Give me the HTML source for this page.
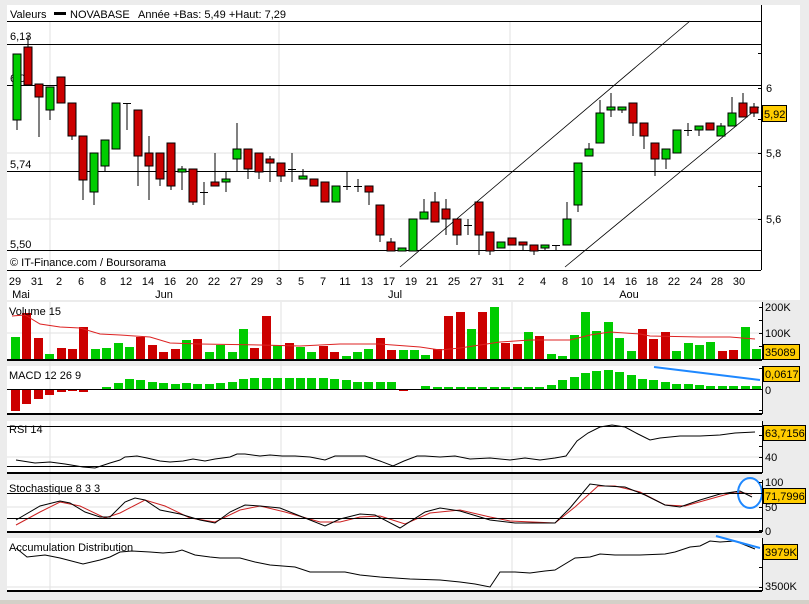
<!DOCTYPE html>
<html><head><meta charset="utf-8"><style>
body{margin:0;background:#ececec;width:809px;height:604px;overflow:hidden}
svg{display:block;font-family:"Liberation Sans",sans-serif}
.g{fill:#00cc00;stroke:#000;stroke-width:1}
.r{fill:#cc0000;stroke:#000;stroke-width:1}
.vg{fill:#00cc00}.vr{fill:#cc0000}
text{font-size:11px;fill:#000}
.y{fill:#ffcc00;stroke:#000;stroke-width:1}
</style></head><body>
<svg width="809" height="604" viewBox="0 0 809 604">
<rect width="809" height="604" fill="#ececec"/>
<!-- main chart -->
<rect x="7" y="5" width="793" height="295" fill="#fff"/>
<g stroke="#e2e2e2" stroke-width="1">
<line x1="50" y1="21" x2="50" y2="270"/><line x1="279" y1="21" x2="279" y2="270"/><line x1="510" y1="21" x2="510" y2="270"/>
<line x1="7" y1="153" x2="761" y2="153"/><line x1="7" y1="219" x2="761" y2="219"/>
</g>
<g stroke="#000" stroke-width="1">
<line x1="7" y1="21.5" x2="761" y2="21.5"/>
<line x1="7" y1="44.5" x2="761" y2="44.5"/>
<line x1="7" y1="85.5" x2="761" y2="85.5"/>
<line x1="7" y1="171.5" x2="761" y2="171.5"/>
<line x1="7" y1="250.5" x2="761" y2="250.5"/>
<line x1="7" y1="270.5" x2="761" y2="270.5"/>
<line x1="761.5" y1="5" x2="761.5" y2="270"/>
<line x1="758" y1="53.5" x2="761" y2="53.5"/><line x1="758" y1="119.5" x2="761" y2="119.5"/><line x1="758" y1="186.5" x2="761" y2="186.5"/>
<line x1="758" y1="88.5" x2="761" y2="88.5"/><line x1="758" y1="153.5" x2="761" y2="153.5"/><line x1="758" y1="219.5" x2="761" y2="219.5"/>
</g>
<g stroke="#000" stroke-width="0.8">
<line x1="400" y1="267" x2="690" y2="21"/>
<line x1="565" y1="267" x2="759" y2="107"/>
</g>
<text x="10" y="18">Valeurs</text><rect x="54" y="12" width="12" height="3" fill="#000"/>
<text x="70" y="18">NOVABASE</text><text x="138" y="18">Année +Bas: 5,49 +Haut: 7,29</text>
<text x="10" y="40" font-size="10">6,13</text>
<text x="10" y="82" font-size="10">6,00</text>
<text x="10" y="168" font-size="10">5,74</text>
<text x="10" y="248" font-size="10">5,50</text>
<text x="10" y="266">© IT-Finance.com / Boursorama</text>
<text x="766" y="92">6</text><text x="766" y="157">5,8</text><text x="766" y="223">5,6</text>
<rect class="y" x="762.5" y="105.5" width="24" height="16"/><text x="764" y="118" font-size="12">5,92</text>
<!-- candles -->
<g stroke="#000" stroke-width="1">
<line x1="17" y1="54" x2="17" y2="130"/><line x1="28" y1="35" x2="28" y2="85"/><line x1="39" y1="84" x2="39" y2="137"/><line x1="50" y1="87" x2="50" y2="120"/>
<line x1="72" y1="103" x2="72" y2="140"/><line x1="83" y1="136" x2="83" y2="200"/><line x1="94" y1="153" x2="94" y2="205"/><line x1="105" y1="140" x2="105" y2="172"/>
<line x1="127" y1="103" x2="127" y2="130"/><line x1="123" y1="103.5" x2="131" y2="103.5"/>
<line x1="138" y1="110" x2="138" y2="186"/><line x1="149" y1="136" x2="149" y2="200"/><line x1="160" y1="153" x2="160" y2="186"/><line x1="171" y1="143" x2="171" y2="190"/><line x1="182" y1="166" x2="182" y2="190"/><line x1="193" y1="169" x2="193" y2="205"/>
<line x1="204" y1="182" x2="204" y2="205"/><line x1="200" y1="192.5" x2="208" y2="192.5"/>
<line x1="215" y1="153" x2="215" y2="186"/><line x1="226" y1="172" x2="226" y2="192"/><line x1="237" y1="123" x2="237" y2="172"/><line x1="248" y1="149" x2="248" y2="179"/><line x1="259" y1="153" x2="259" y2="179"/><line x1="270" y1="156" x2="270" y2="182"/><line x1="281" y1="163" x2="281" y2="182"/>
<line x1="292" y1="153" x2="292" y2="182"/><line x1="288" y1="169.5" x2="296" y2="169.5"/>
<line x1="303" y1="169" x2="303" y2="179"/>
<line x1="347" y1="172" x2="347" y2="190"/><line x1="343" y1="186.5" x2="351" y2="186.5"/>
<line x1="358" y1="179" x2="358" y2="192"/><line x1="354" y1="186.5" x2="362" y2="186.5"/>
<line x1="369" y1="186" x2="369" y2="205"/><line x1="380" y1="205" x2="380" y2="242"/><line x1="391" y1="238" x2="391" y2="251"/>
<line x1="424" y1="199" x2="424" y2="219"/><line x1="435" y1="192" x2="435" y2="222"/><line x1="446" y1="199" x2="446" y2="235"/><line x1="457" y1="219" x2="457" y2="245"/>
<line x1="468" y1="219" x2="468" y2="235"/><line x1="464" y1="225.5" x2="472" y2="225.5"/>
<line x1="479" y1="202" x2="479" y2="255"/><line x1="490" y1="232" x2="490" y2="255"/><line x1="523" y1="242" x2="523" y2="250"/><line x1="534" y1="245" x2="534" y2="255"/><line x1="545" y1="245" x2="545" y2="250"/>
<line x1="556" y1="245" x2="556" y2="250"/><line x1="552" y1="245.5" x2="560" y2="245.5"/>
<line x1="567" y1="202" x2="567" y2="245"/><line x1="578" y1="163" x2="578" y2="212"/><line x1="589" y1="143" x2="589" y2="156"/><line x1="600" y1="100" x2="600" y2="143"/><line x1="611" y1="93" x2="611" y2="117"/><line x1="622" y1="107" x2="622" y2="113"/>
<line x1="633" y1="103" x2="633" y2="136"/><line x1="644" y1="123" x2="644" y2="149"/><line x1="655" y1="143" x2="655" y2="176"/><line x1="666" y1="149" x2="666" y2="169"/>
<line x1="688" y1="123" x2="688" y2="136"/><line x1="684" y1="130.5" x2="692" y2="130.5"/>
<line x1="699" y1="126" x2="699" y2="136"/><line x1="721" y1="123" x2="721" y2="136"/><line x1="732" y1="97" x2="732" y2="126"/><line x1="743" y1="93" x2="743" y2="117"/><line x1="754" y1="103" x2="754" y2="117"/>
</g>
<rect class="g" x="13" y="54" width="8" height="66"/><rect class="r" x="24" y="47" width="8" height="38"/><rect class="r" x="35" y="84" width="8" height="13"/><rect class="g" x="46" y="87" width="8" height="23"/>
<rect class="r" x="57" y="77" width="8" height="26"/><rect class="r" x="68" y="103" width="8" height="33"/><rect class="r" x="79" y="136" width="8" height="44"/><rect class="g" x="90" y="153" width="8" height="39"/>
<rect class="g" x="101" y="140" width="8" height="26"/><rect class="g" x="112" y="103" width="8" height="46"/><rect class="r" x="134" y="110" width="8" height="46"/><rect class="r" x="145" y="153" width="8" height="13"/>
<rect class="r" x="156" y="153" width="8" height="26"/><rect class="r" x="167" y="143" width="8" height="43"/><rect class="g" x="178" y="169" width="8" height="3"/><rect class="r" x="189" y="169" width="8" height="33"/>
<rect class="r" x="211" y="182" width="8" height="4"/><rect class="g" x="222" y="179" width="8" height="3"/><rect class="g" x="233" y="149" width="8" height="10"/><rect class="r" x="244" y="149" width="8" height="20"/>
<rect class="r" x="255" y="153" width="8" height="19"/><rect class="r" x="266" y="159" width="8" height="4"/><rect class="r" x="277" y="163" width="8" height="13"/><rect class="g" x="299" y="176" width="8" height="3"/>
<rect class="r" x="310" y="179" width="8" height="7"/><rect class="r" x="321" y="182" width="8" height="20"/><rect class="g" x="332" y="186" width="8" height="16"/><rect class="r" x="365" y="186" width="8" height="6"/>
<rect class="r" x="376" y="205" width="8" height="30"/><rect class="r" x="387" y="242" width="8" height="9"/><rect class="g" x="398" y="248" width="8" height="3"/><rect class="g" x="409" y="219" width="8" height="32"/>
<rect class="g" x="420" y="212" width="8" height="7"/><rect class="r" x="431" y="202" width="8" height="20"/><rect class="r" x="442" y="209" width="8" height="10"/><rect class="r" x="453" y="219" width="8" height="16"/>
<rect class="r" x="475" y="202" width="8" height="33"/><rect class="r" x="486" y="232" width="8" height="19"/><rect class="g" x="497" y="242" width="8" height="6"/><rect class="r" x="508" y="238" width="8" height="7"/>
<rect class="r" x="519" y="242" width="8" height="3"/><rect class="r" x="530" y="245" width="8" height="6"/><rect class="g" x="541" y="245" width="8" height="3"/><rect class="g" x="563" y="219" width="8" height="26"/>
<rect class="g" x="574" y="163" width="8" height="42"/><rect class="g" x="585" y="149" width="8" height="7"/><rect class="g" x="596" y="113" width="8" height="30"/><rect class="g" x="607" y="107" width="8" height="3"/>
<rect class="g" x="618" y="107" width="8" height="3"/><rect class="r" x="629" y="103" width="8" height="20"/><rect class="r" x="640" y="123" width="8" height="13"/><rect class="r" x="651" y="143" width="8" height="16"/>
<rect class="g" x="662" y="149" width="8" height="10"/><rect class="g" x="673" y="130" width="8" height="23"/><rect class="g" x="695" y="126" width="8" height="4"/><rect class="r" x="706" y="123" width="8" height="7"/>
<rect class="g" x="717" y="126" width="8" height="10"/><rect class="g" x="728" y="113" width="8" height="13"/><rect class="r" x="739" y="103" width="8" height="14"/><rect class="r" x="750" y="107" width="8" height="6"/>
<!-- dates -->
<g font-size="11" text-anchor="middle">
<text x="15" y="285">29</text><text x="37" y="285">31</text><text x="59" y="285">2</text><text x="81" y="285">6</text><text x="103" y="285">8</text><text x="126" y="285">12</text><text x="148" y="285">14</text><text x="170" y="285">16</text><text x="192" y="285">20</text><text x="214" y="285">22</text><text x="236" y="285">27</text><text x="257" y="285">29</text><text x="279" y="285">3</text><text x="301" y="285">5</text><text x="323" y="285">7</text><text x="345" y="285">11</text><text x="367" y="285">13</text><text x="389" y="285">17</text>
<text x="411" y="285">19</text><text x="432" y="285">21</text><text x="454" y="285">25</text><text x="476" y="285">27</text><text x="498" y="285">31</text><text x="521" y="285">2</text><text x="543" y="285">4</text><text x="565" y="285">8</text><text x="587" y="285">10</text><text x="609" y="285">14</text><text x="631" y="285">16</text><text x="652" y="285">18</text><text x="674" y="285">22</text><text x="696" y="285">24</text><text x="717" y="285">28</text><text x="739" y="285">30</text>
<text x="21" y="298">Mai</text><text x="164" y="298">Jun</text><text x="395" y="298">Jul</text><text x="629" y="298">Aou</text>
</g>
<!-- lower panels backgrounds -->
<rect x="7" y="302" width="755" height="58" fill="#fff"/>
<rect x="7" y="366" width="755" height="48" fill="#fff"/>
<rect x="7" y="421" width="755" height="52" fill="#fff"/>
<rect x="7" y="480" width="755" height="52" fill="#fff"/>
<rect x="7" y="538" width="755" height="53" fill="#fff"/>
<g stroke="#e2e2e2">
<line x1="50" y1="302" x2="50" y2="591"/><line x1="281" y1="302" x2="281" y2="591"/><line x1="512" y1="302" x2="512" y2="591"/>
<line x1="7" y1="333" x2="762" y2="333"/><line x1="7" y1="457" x2="762" y2="457"/><line x1="7" y1="507" x2="762" y2="507"/><line x1="7" y1="587" x2="762" y2="587"/>
</g>
<!-- volume bars -->
<g class="vg"><rect x="11" y="337" width="9" height="22"/><rect x="45" y="354" width="9" height="5"/><rect x="91" y="349" width="9" height="10"/><rect x="102" y="348" width="9" height="11"/><rect x="114" y="343" width="9" height="16"/><rect x="125" y="347" width="9" height="12"/><rect x="182" y="340" width="9" height="19"/><rect x="205" y="352" width="9" height="7"/><rect x="216" y="345" width="9" height="14"/><rect x="228" y="352" width="9" height="7"/><rect x="239" y="329" width="9" height="30"/><rect x="273" y="345" width="9" height="14"/><rect x="296" y="347" width="9" height="12"/><rect x="307" y="352" width="9" height="7"/><rect x="342" y="356" width="9" height="3"/><rect x="353" y="352" width="9" height="7"/><rect x="364" y="349" width="9" height="10"/><rect x="399" y="350" width="9" height="9"/><rect x="410" y="350" width="9" height="9"/><rect x="421" y="355" width="9" height="4"/><rect x="467" y="329" width="9" height="30"/><rect x="490" y="307" width="9" height="52"/><rect x="524" y="332" width="9" height="27"/><rect x="547" y="354" width="9" height="5"/><rect x="558" y="356" width="9" height="3"/><rect x="570" y="335" width="9" height="24"/><rect x="581" y="312" width="9" height="47"/><rect x="592" y="331" width="9" height="28"/><rect x="604" y="322" width="9" height="37"/><rect x="615" y="338" width="9" height="21"/><rect x="627" y="351" width="9" height="8"/><rect x="672" y="351" width="9" height="8"/><rect x="684" y="343" width="9" height="16"/><rect x="695" y="345" width="9" height="14"/><rect x="706" y="342" width="9" height="17"/><rect x="741" y="327" width="9" height="32"/><rect x="752" y="349" width="9" height="10"/></g>
<g class="vr"><rect x="22" y="313" width="9" height="46"/><rect x="34" y="338" width="9" height="21"/><rect x="57" y="348" width="9" height="11"/><rect x="68" y="349" width="9" height="10"/><rect x="79" y="327" width="9" height="32"/><rect x="136" y="337" width="9" height="22"/><rect x="148" y="345" width="9" height="14"/><rect x="159" y="352" width="9" height="7"/><rect x="171" y="349" width="9" height="10"/><rect x="193" y="339" width="9" height="20"/><rect x="250" y="348" width="9" height="11"/><rect x="262" y="316" width="9" height="43"/><rect x="285" y="343" width="9" height="16"/><rect x="319" y="346" width="9" height="13"/><rect x="330" y="352" width="9" height="7"/><rect x="376" y="338" width="9" height="21"/><rect x="387" y="350" width="9" height="9"/><rect x="433" y="349" width="9" height="10"/><rect x="444" y="316" width="9" height="43"/><rect x="456" y="312" width="9" height="47"/><rect x="478" y="312" width="9" height="47"/><rect x="501" y="343" width="9" height="16"/><rect x="513" y="344" width="9" height="15"/><rect x="535" y="336" width="9" height="23"/><rect x="638" y="329" width="9" height="30"/><rect x="649" y="339" width="9" height="20"/><rect x="661" y="332" width="9" height="27"/><rect x="718" y="351" width="9" height="8"/><rect x="729" y="350" width="9" height="9"/><rect x="741" y="334" width="0" height="0"/><rect x="752" y="334" width="0" height="0"/></g>
<polyline fill="none" stroke="#dd2222" stroke-width="1" points="12,316 25,315 40,324 60,327 80,328 100,334 120,335 150,337 170,343 200,344 260,345 300,346 340,344 380,344 420,347 440,350 460,348 480,345 500,342 530,340 570,340 590,335 610,332 640,334 650,336 700,337 730,337 755,339"/>
<!-- MACD -->
<g class="vr"><rect x="11" y="389" width="9" height="22"/><rect x="22" y="389" width="9" height="15"/><rect x="34" y="389" width="9" height="10"/><rect x="45" y="389" width="9" height="6"/><rect x="57" y="389" width="9" height="3"/><rect x="68" y="389" width="9" height="2"/><rect x="79" y="389" width="9" height="3"/><rect x="91" y="389" width="9" height="1"/><rect x="399" y="389" width="9" height="2"/></g>
<g class="vg"><rect x="102" y="387" width="9" height="2"/><rect x="114" y="383" width="9" height="6"/><rect x="125" y="379" width="9" height="10"/><rect x="136" y="380" width="9" height="9"/><rect x="148" y="382" width="9" height="7"/><rect x="159" y="383" width="9" height="6"/><rect x="171" y="384" width="9" height="5"/><rect x="182" y="383" width="9" height="6"/><rect x="193" y="384" width="9" height="5"/><rect x="205" y="384" width="9" height="5"/><rect x="216" y="383" width="9" height="6"/><rect x="228" y="382" width="9" height="7"/><rect x="239" y="379" width="9" height="10"/><rect x="250" y="378" width="9" height="11"/><rect x="262" y="378" width="9" height="11"/><rect x="273" y="378" width="9" height="11"/><rect x="285" y="378" width="9" height="11"/><rect x="296" y="378" width="9" height="11"/><rect x="307" y="378" width="9" height="11"/><rect x="319" y="378" width="9" height="11"/><rect x="330" y="379" width="9" height="10"/><rect x="342" y="380" width="9" height="9"/><rect x="353" y="382" width="9" height="7"/><rect x="364" y="382" width="9" height="7"/><rect x="376" y="382" width="9" height="7"/><rect x="387" y="382" width="9" height="7"/><rect x="421" y="386" width="9" height="3"/><rect x="433" y="387" width="9" height="2"/><rect x="444" y="387" width="9" height="2"/><rect x="456" y="387" width="9" height="2"/><rect x="467" y="387" width="9" height="2"/><rect x="478" y="387" width="9" height="2"/><rect x="490" y="387" width="9" height="2"/><rect x="501" y="387" width="9" height="2"/><rect x="513" y="387" width="9" height="2"/><rect x="524" y="387" width="9" height="2"/><rect x="535" y="387" width="9" height="2"/><rect x="547" y="385" width="9" height="4"/><rect x="558" y="380" width="9" height="9"/><rect x="570" y="377" width="9" height="12"/><rect x="581" y="373" width="9" height="16"/><rect x="592" y="371" width="9" height="18"/><rect x="604" y="370" width="9" height="19"/><rect x="615" y="372" width="9" height="17"/><rect x="627" y="375" width="9" height="14"/><rect x="638" y="379" width="9" height="10"/><rect x="649" y="380" width="9" height="9"/><rect x="661" y="382" width="9" height="7"/><rect x="672" y="384" width="9" height="5"/><rect x="684" y="384" width="9" height="5"/><rect x="695" y="385" width="9" height="4"/><rect x="706" y="386" width="9" height="3"/><rect x="718" y="386" width="9" height="3"/><rect x="729" y="386" width="9" height="3"/><rect x="741" y="386" width="9" height="3"/><rect x="752" y="386" width="9" height="3"/></g>
<line x1="654" y1="367" x2="760" y2="380" stroke="#1e88ff" stroke-width="2"/>
<!-- RSI -->
<polyline fill="none" stroke="#000" stroke-width="1" points="16,460 35,463 50,462 65,464 83,467 95,468 110,463 120,460 125,457 137,456 147,458 160,461 170,462 183,461 193,459 205,461 215,459 230,457 237,454 245,454 260,456 270,455 282,456 295,456 310,457 325,460 335,456 350,456 365,456 380,461 393,466 404,461 417,456 425,456 440,457 455,456 470,459 490,458 510,460 525,458 540,460 555,458 566,456 577,441 588,433 600,427 612,425 625,427 638,434 650,440 660,438 680,436 700,436 720,435 735,433 755,432"/>
<!-- Stoch -->
<polyline fill="none" stroke="#cc2222" stroke-width="1" points="16,525 40,512 60,502 80,506 105,518 120,513 145,500 165,506 190,518 215,522 240,510 260,506 285,512 320,522 340,522 360,517 380,516 405,524 430,513 460,510 490,517 510,521 555,523 575,507 598,486 615,486 640,492 665,505 685,506 710,499 735,492 752,494"/>
<polyline fill="none" stroke="#000" stroke-width="1" points="16,520 40,506 60,501 70,503 85,512 100,517 110,517 125,502 135,498 145,500 160,510 180,514 200,520 215,523 230,512 245,505 260,506 280,508 300,516 325,526 340,519 360,514 375,515 400,528 425,512 440,508 460,511 490,520 515,523 555,523 570,508 590,484 605,486 625,487 645,495 665,505 680,507 700,500 720,494 740,491 752,497"/>
<ellipse cx="750" cy="493" rx="12" ry="15" fill="none" stroke="#1e88ff" stroke-width="2"/>
<!-- AccDist -->
<polyline fill="none" stroke="#000" stroke-width="1" points="16,548 27,557 45,555 60,558 83,564 100,560 110,557 120,552 132,551 150,552 163,553 175,552 182,550 195,555 210,557 220,558 240,558 255,562 270,565 295,567 310,572 330,572 345,572 360,575 380,577 395,578 410,579 440,580 460,582 475,584 490,587 500,572 515,572 530,573 545,571 555,570 575,558 590,557 600,554 615,555 640,555 665,554 675,552 690,547 700,546 710,541 720,542 735,541 745,545 755,549"/>
<line x1="716" y1="536" x2="760" y2="548" stroke="#1e88ff" stroke-width="2"/>
<!-- panel lines -->
<g stroke="#000" stroke-width="1">
<line x1="7" y1="360" x2="762" y2="360" stroke-width="2"/>
<line x1="7" y1="389.5" x2="762" y2="389.5"/>
<line x1="7" y1="414" x2="762" y2="414" stroke-width="2"/>
<line x1="7" y1="426.5" x2="762" y2="426.5"/><line x1="7" y1="466.5" x2="762" y2="466.5"/>
<line x1="7" y1="473" x2="762" y2="473" stroke-width="2"/>
<line x1="7" y1="493.5" x2="762" y2="493.5"/><line x1="7" y1="518.5" x2="762" y2="518.5"/>
<line x1="7" y1="532" x2="762" y2="532" stroke-width="2"/>
<line x1="7" y1="591" x2="762" y2="591" stroke-width="2"/>
<line x1="762.5" y1="302" x2="762.5" y2="360"/><line x1="762.5" y1="366" x2="762.5" y2="414"/><line x1="762.5" y1="421" x2="762.5" y2="473"/><line x1="762.5" y1="480" x2="762.5" y2="532"/><line x1="762.5" y1="538" x2="762.5" y2="591"/>
<line x1="759" y1="307.5" x2="762" y2="307.5"/><line x1="759" y1="320.5" x2="762" y2="320.5"/><line x1="759" y1="333.5" x2="762" y2="333.5"/><line x1="759" y1="346.5" x2="762" y2="346.5"/>
<line x1="759" y1="368.5" x2="762" y2="368.5"/><line x1="759" y1="389.5" x2="762" y2="389.5"/><line x1="759" y1="410.5" x2="762" y2="410.5"/>
<line x1="759" y1="435.5" x2="762" y2="435.5"/><line x1="759" y1="446.5" x2="762" y2="446.5"/><line x1="759" y1="457.5" x2="762" y2="457.5"/>
<line x1="759" y1="482.5" x2="762" y2="482.5"/><line x1="759" y1="507.5" x2="762" y2="507.5"/><line x1="759" y1="530.5" x2="762" y2="530.5"/>
<line x1="759" y1="567.5" x2="762" y2="567.5"/><line x1="759" y1="587.5" x2="762" y2="587.5"/>
</g>
<g font-size="10">
<text x="9" y="315">Volume 15</text><text x="9" y="379">MACD 12 26 9</text><text x="9" y="433">RSI 14</text><text x="9" y="492">Stochastique 8 3 3</text><text x="9" y="551">Accumulation Distribution</text>
<text x="765" y="311">200K</text><text x="765" y="337">100K</text><text x="765" y="394">0</text><text x="765" y="461">40</text><text x="765" y="486">100</text><text x="765" y="511">50</text><text x="765" y="535">0</text><text x="765" y="590">3500K</text>
</g>
<g font-size="11">
<rect class="y" x="763.5" y="344.5" width="36" height="15"/><text x="765" y="356">35089</text>
<rect class="y" x="763.5" y="366.5" width="36" height="15"/><text x="765" y="378">0,0617</text>
<rect class="y" x="763.5" y="425.5" width="42" height="15"/><text x="765" y="437">63,7156</text>
<rect class="y" x="763.5" y="488.5" width="42" height="15"/><text x="765" y="500">71,7996</text>
<rect class="y" x="763.5" y="544.5" width="34" height="15"/><text x="765" y="556">3979K</text>
</g>
<rect x="0" y="600" width="809" height="4" fill="#d4d0c8"/>
</svg>
</body></html>
